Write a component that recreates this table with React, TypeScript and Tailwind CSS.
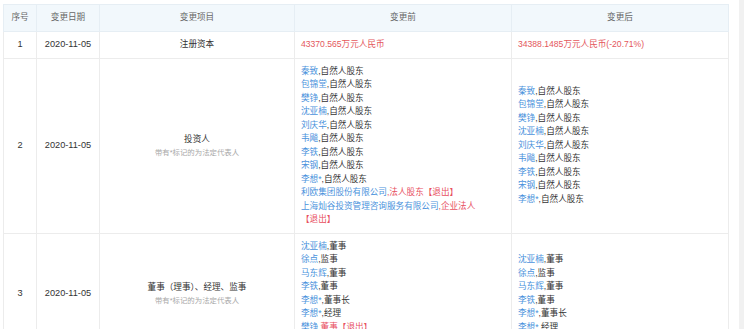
import React from "react";

interface Entry {
  name: string;
  role: string;
  exited?: boolean;
}

interface ChangeRow {
  no: number;
  date: string;
  item: string;
  note?: string;
  before: Entry[] | string;
  after: Entry[] | string;
}

const investors: Entry[] = [
  { name: "秦致", role: "自然人股东" },
  { name: "包锦堂", role: "自然人股东" },
  { name: "樊铮", role: "自然人股东" },
  { name: "沈亚楠", role: "自然人股东" },
  { name: "刘庆华", role: "自然人股东" },
  { name: "韦飚", role: "自然人股东" },
  { name: "李铁", role: "自然人股东" },
  { name: "宋钢", role: "自然人股东" },
  { name: "李想*", role: "自然人股东" },
];

const directors: Entry[] = [
  { name: "沈亚楠", role: "董事" },
  { name: "徐点", role: "监事" },
  { name: "马东辉", role: "董事" },
  { name: "李铁", role: "董事" },
  { name: "李想*", role: "董事长" },
  { name: "李想*", role: "经理" },
];

const rows: ChangeRow[] = [
  {
    no: 1,
    date: "2020-11-05",
    item: "注册资本",
    before: "43370.565万元人民币",
    after: "34388.1485万元人民币(-20.71%)",
  },
  {
    no: 2,
    date: "2020-11-05",
    item: "投资人",
    note: "带有*标记的为法定代表人",
    before: [
      ...investors,
      { name: "利欧集团股份有限公司", role: "法人股东", exited: true },
      { name: "上海灿谷投资管理咨询服务有限公司", role: "企业法人", exited: true },
    ],
    after: investors,
  },
  {
    no: 3,
    date: "2020-11-05",
    item: "董事（理事）、经理、监事",
    note: "带有*标记的为法定代表人",
    before: [
      ...directors,
      { name: "樊铮", role: "董事", exited: true },
      { name: "宋钢", role: "监事", exited: true },
    ],
    after: directors,
  },
];

const EntryList: React.FC<{ value: Entry[] | string }> = ({ value }) => {
  if (typeof value === "string") {
    return <div className="text-[#e4575c]">{value}</div>;
  }
  return (
    <div>
      {value.map((e, i) => (
        <div key={i}>
          <span className="text-[#4a92dc]">{e.name}</span>
          {e.exited ? (
            <span className="text-[#e8505f]">
              ,{e.role}
              <span className="inline-block whitespace-nowrap">【退出】</span>
            </span>
          ) : (
            <span>,{e.role}</span>
          )}
        </div>
      ))}
    </div>
  );
};

export default function App() {
  return (
    <div
      className="flex h-[329px] w-[744px] overflow-hidden bg-white text-[8.6px] leading-[13.5px] text-[#333]"
      style={{ fontFamily: '"Liberation Sans", "Noto Sans CJK SC", sans-serif' }}
    >
      <div className="pl-[3px] pt-[4px]">
        <table className="w-[725px] table-fixed border-collapse">
          <colgroup>
            <col className="w-[33px]" />
            <col className="w-[63px]" />
            <col className="w-[195px]" />
            <col className="w-[217px]" />
            <col className="w-[217px]" />
          </colgroup>
          <thead>
            <tr className="h-[27px] bg-[#f2f8fc] text-[#666]">
              <th className="border border-[#e6eef4] font-normal">序号</th>
              <th className="border border-[#e6eef4] font-normal">变更日期</th>
              <th className="border border-[#e6eef4] font-normal">变更项目</th>
              <th className="border border-[#e6eef4] font-normal">变更前</th>
              <th className="border border-[#e6eef4] font-normal">变更后</th>
            </tr>
          </thead>
          <tbody>
            {rows.map((row) => (
              <tr key={row.no}>
                <td className="border border-[#ececec] text-center text-[9.2px]">{row.no}</td>
                <td className="border border-[#ececec] text-center text-[9.2px]">{row.date}</td>
                <td className="border border-[#ececec] text-center">
                  <div>{row.item}</div>
                  {row.note && (
                    <div className="mt-[1px] text-[7.4px] leading-[11px] text-[#a8a8a8]">
                      {row.note}
                    </div>
                  )}
                </td>
                <td className="border border-[#ececec] px-[6px] py-[6px] align-middle">
                  <EntryList value={row.before} />
                </td>
                <td className="border border-[#ececec] px-[6px] py-[6px] align-middle">
                  <EntryList value={row.after} />
                </td>
              </tr>
            ))}
          </tbody>
        </table>
      </div>
      <div className="flex-1" />
      <div className="w-[5px] bg-[#f1f1f1]" />
    </div>
  );
}
